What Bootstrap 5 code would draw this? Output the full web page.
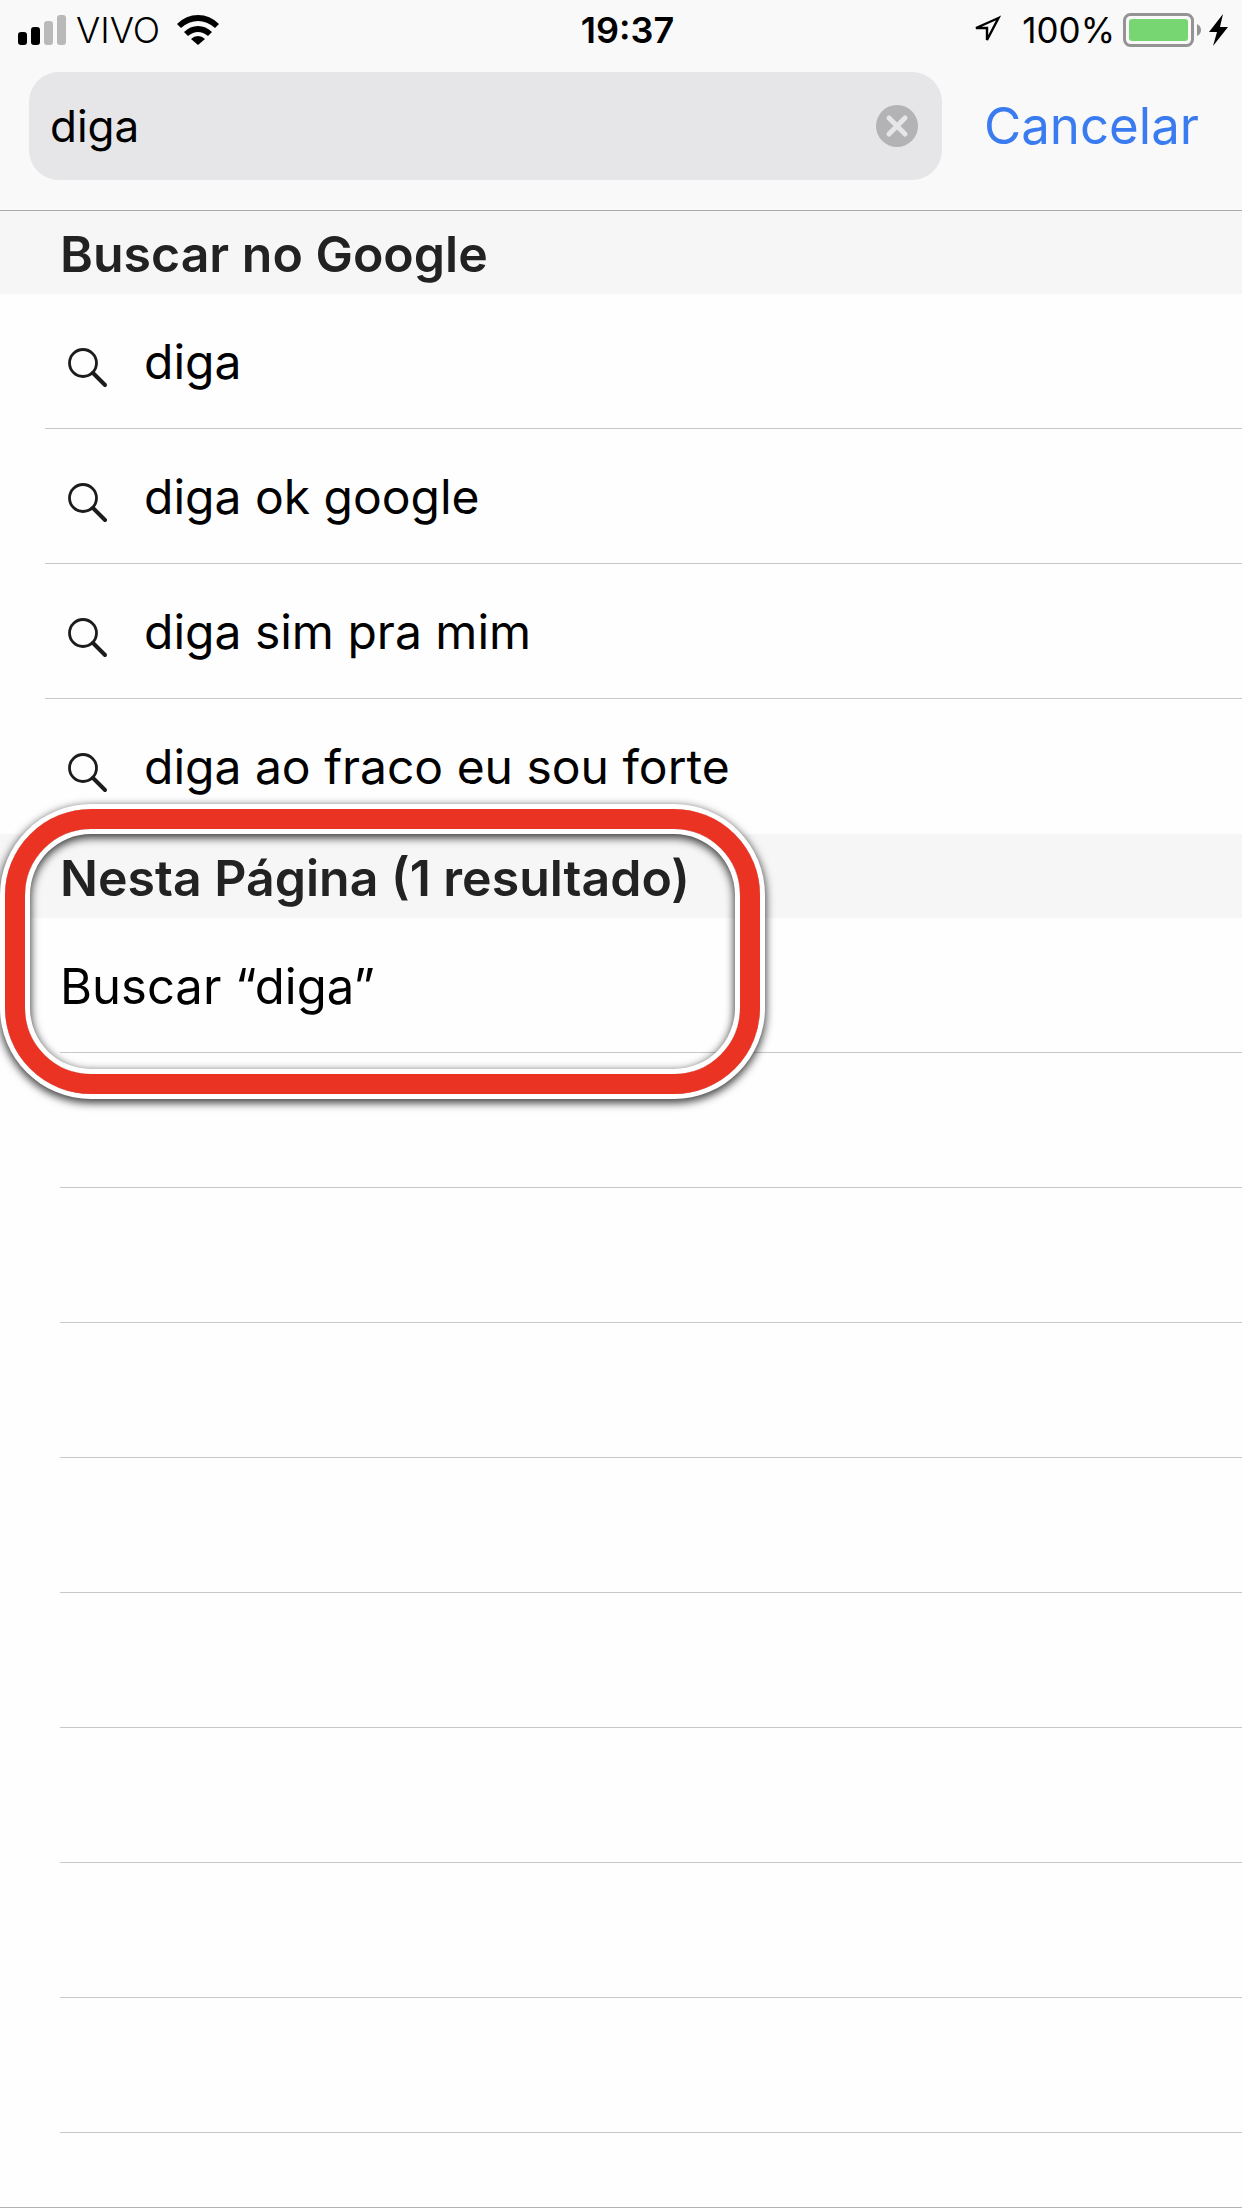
<!DOCTYPE html>
<html lang="pt-BR">
<head>
<meta charset="utf-8">
<meta name="viewport" content="width=device-width, initial-scale=1">
<title>Buscar</title>
<link rel="stylesheet" href="https://cdn.jsdelivr.net/npm/bootstrap@5.3.0/dist/css/bootstrap.min.css">
<style>
  body { font-family: Inter, "Liberation Sans", sans-serif; font-size: 48px; color: #000; background: #fefefe; }
  svg { display: block; flex: none; }
  .top-area { background: #f9f9f9; height: 210px; box-shadow: 0 1px 0 #aaaaac; z-index: 1; }
  .status-bar { height: 60px; padding: 0 14px 0 18px; font-size: 36px; line-height: 62px; }
  .status-side { flex: 1 1 0; }
  .carrier { font-weight: 300; margin: 0 17px 0 10px; }
  .clock { font-weight: 600; padding-left: 9px; }
  .battery-level { margin: 0 8px 0 21px; font-size: 35px; }
  .search-form { padding: 12px 43px 0 29px; gap: 42px; }
  .search-field { height: 108px; border-radius: 30px; background: #e6e6e8; padding: 0 24px 0 21px; }
  .search-field input { font-size: 44px; height: 80px; line-height: 80px; color: #000; }
  .search-field input:focus { outline: none; }
  .cancel-link { font-size: 51px; line-height: 64px; color: #3a7cf0; }
  .group-title { height: 84px; padding: 0 60px; margin: 0; background: #f6f6f7; color: #222; font-size: 50px; line-height: 88px; font-weight: 600; }
  .result-row { height: 135px; color: #000; }
  .result-row a { height: 135px; }
  .suggestions .result-row { margin-left: 45px; padding-left: 23px; }
  .suggestions a { gap: 36px; }
  .lens-icon { margin-top: 12px; }
  .in-page .result-row { margin-left: 60px; }
  .in-page a { font-size: 49px; padding-top: 2px; }
  .ruled { border-bottom: 1px solid #c8c8ca; }
  .page-end { border-bottom: 1px solid #b2b2b4; height: 75px; }
  .marker-ring {
    left: 5px; top: -25px; width: 755px; height: 285px; pointer-events: none;
    border: 20px solid #eb3323; border-radius: 86px;
    box-shadow: 0 0 0 5px #fff, 0 3px 9px 6px rgba(0,0,0,.75),
      inset 0 0 0 5px #fff, inset 0 3px 9px 6px rgba(0,0,0,.75);
  }
</style>
</head>
<body>
<header class="top-area position-relative">
  <div class="status-bar d-flex align-items-center">
    <div class="status-side d-flex align-items-center">
      <svg width="48" height="30" viewBox="0 0 48 30" aria-hidden="true">
        <rect y="17" width="9" height="13" rx="3"/><rect x="13" y="12" width="9" height="18" rx="3"/>
        <rect x="26" y="6" width="9" height="24" rx="3" fill="#b9b9b9"/><rect x="39" width="9" height="30" rx="3" fill="#b9b9b9"/>
      </svg>
      <span class="carrier">VIVO</span>
      <svg width="42" height="30" viewBox="0 0 42 30" aria-hidden="true">
        <path d="M0 9Q9 0 21 0T42 9L38 13Q30 6 21 6T4 13Z"/>
        <path d="M7 17Q13 11 21 11T35 17L31 21Q26 17 21 17T11 21Z"/>
        <path d="M14 24Q17 21 21 21T28 24L21 30Z"/>
      </svg>
    </div>
    <time class="clock">19:37</time>
    <div class="status-side d-flex align-items-center justify-content-end">
      <svg width="30" height="30" viewBox="0 0 30 30" aria-hidden="true"><path d="M27.500 3 5 13H16V25Z" fill="none" stroke="#000" stroke-width="2.400"/></svg>
      <span class="battery-level">100%</span>
      <svg width="78" height="34" viewBox="0 0 78 34" aria-hidden="true">
        <rect x="1.500" y="1.500" width="68" height="31" rx="6" fill="none" stroke="#949495" stroke-width="3"/>
        <rect x="6" y="6" width="59" height="22" rx="3" fill="#78d672"/>
        <path d="M74 11Q78 13 78 17T74 23Z" fill="#949495"/>
      </svg>
      <svg class="ms-2" width="19" height="32" viewBox="0 0 19 32" aria-hidden="true"><path d="M14 0 0 18H8L4 32 19 13H11Z"/></svg>
    </div>
  </div>
  <form class="search-form d-flex align-items-center" role="search">
    <div class="search-field d-flex align-items-center flex-fill">
      <input class="border-0 bg-transparent p-0 flex-fill" type="text" value="diga" aria-label="Buscar">
      <button class="btn border-0 p-0" type="reset" aria-label="Limpar">
        <svg width="42" height="42" viewBox="0 0 42 42"><circle cx="21" cy="21" r="21" fill="#b3b3b5"/><path d="m13 13 16 16m0-16L13 29" stroke="#e6e6e8" stroke-width="5" stroke-linecap="round"/></svg>
      </button>
    </div>
    <a class="cancel-link text-decoration-none" href="#">Cancelar</a>
  </form>
</header>

<svg class="d-none" aria-hidden="true">
  <symbol id="lens" viewBox="0 0 40 40"><circle cx="15" cy="15" r="13.500" fill="none" stroke="#1c1c1c" stroke-width="2.800"/><path d="m25 25 12 12" stroke="#1c1c1c" stroke-width="4" stroke-linecap="round"/></symbol>
</svg>

<main>
  <section class="suggestions">
    <h2 class="group-title">Buscar no Google</h2>
    <ul class="list-unstyled mb-0">
      <li class="result-row ruled"><a class="d-flex align-items-center text-reset text-decoration-none" href="#"><svg class="lens-icon" width="40" height="40"><use href="#lens"/></svg>diga</a></li>
      <li class="result-row ruled"><a class="d-flex align-items-center text-reset text-decoration-none" href="#"><svg class="lens-icon" width="40" height="40"><use href="#lens"/></svg>diga ok google</a></li>
      <li class="result-row ruled"><a class="d-flex align-items-center text-reset text-decoration-none" href="#"><svg class="lens-icon" width="40" height="40"><use href="#lens"/></svg>diga sim pra mim</a></li>
      <li class="result-row"><a class="d-flex align-items-center text-reset text-decoration-none" href="#"><svg class="lens-icon" width="40" height="40"><use href="#lens"/></svg>diga ao fraco eu sou forte</a></li>
    </ul>
  </section>
  <section class="in-page position-relative">
    <h2 class="group-title">Nesta Página (1 resultado)</h2>
    <div class="result-row ruled"><a class="d-flex align-items-center text-reset text-decoration-none" href="#">Buscar “diga”</a></div>
    <div class="result-row ruled"></div>
    <div class="result-row ruled"></div>
    <div class="result-row ruled"></div>
    <div class="result-row ruled"></div>
    <div class="result-row ruled"></div>
    <div class="result-row ruled"></div>
    <div class="result-row ruled"></div>
    <div class="result-row ruled"></div>
    <div class="page-end"></div>
    <div class="marker-ring position-absolute"></div>
  </section>
</main>
<script src="https://cdn.jsdelivr.net/npm/bootstrap@5.3.0/dist/js/bootstrap.bundle.min.js"></script>
</body>
</html>
